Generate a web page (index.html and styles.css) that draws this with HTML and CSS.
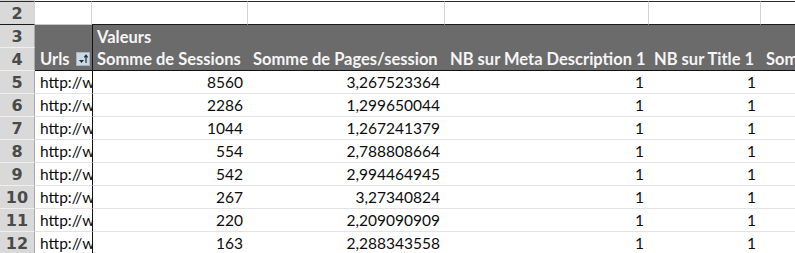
FILE: index.html
```html
<!DOCTYPE html>
<html lang="fr">
<head>
<meta charset="utf-8">
<title>Tableau croisé</title>
<link rel="stylesheet" href="styles.css">
</head>
<body>
<div class="sheet">
  <div class="strip rh"></div><div class="strip wide"></div>

  <div class="rh r2">2</div>
  <div class="c r2 ca"></div>
  <div class="c r2 cb"></div>
  <div class="c r2"></div>
  <div class="c r2"></div>
  <div class="c r2"></div>
  <div class="c r2 last"></div>

  <div class="rh">3</div>
  <div class="c hd ca"></div>
  <div class="c hd cb"><span class="ht">Valeurs</span></div>
  <div class="c hd"></div>
  <div class="c hd"></div>
  <div class="c hd"></div>
  <div class="c hd last"></div>

  <div class="rh">4</div>
  <div class="c hd h4 ca"><span class="ht">Urls</span><span class="filter"><svg width="12" height="12" viewBox="0 0 12 12"><path d="M2 7h5l-2.5 3z" fill="#1e2a38"/><path d="M9 10V2.6M7.3 4.4L9 2.3l1.7 2.1" stroke="#1e2a38" stroke-width="1.2" fill="none"/></svg></span></div>
  <div class="c hd h4 cb"><span class="ht">Somme de Sessions</span></div>
  <div class="c hd h4"><span class="ht">Somme de Pages/session</span></div>
  <div class="c hd h4"><span class="ht">NB sur Meta Description 1</span></div>
  <div class="c hd h4"><span class="ht">NB sur Title 1</span></div>
  <div class="c hd h4 last"><span class="ht">Somme de Titles</span></div>
</div>
<div class="sheet body-rows" id="rows"></div>
<script src="app.js"></script>
</body>
</html>
```
FILE: app.js
```js
const data = [
  [5, 8560, "3,267523364"],
  [6, 2286, "1,299650044"],
  [7, 1044, "1,267241379"],
  [8, 554, "2,788808664"],
  [9, 542, "2,994464945"],
  [10, 267, "3,27340824"],
  [11, 220, "2,209090909"],
  [12, 163, "2,288343558"]
];
const rows = document.getElementById("rows");
let html = "";
for (const [n, s, p] of data) {
  html += `<div class="rh">${n}</div>` +
    `<div class="c d ca"><span class="url">http://www.exemple.fr/</span></div>` +
    `<div class="c d cb num">${s}</div>` +
    `<div class="c d num">${p}</div>` +
    `<div class="c d num">1</div>` +
    `<div class="c d num">1</div>` +
    `<div class="c d last"></div>`;
}
rows.innerHTML = html;
```
FILE: styles.css
```css
* { box-sizing: border-box; }
html, body { margin: 0; padding: 0; background: #fff; overflow: hidden; }
body { width: 795px; height: 253px; }

.sheet {
  display: grid;
  grid-template-columns: 35px 57px 156px 197px 204px 112px 1fr;
  grid-auto-rows: 23px;
  font-family: "Lato", "Liberation Sans", sans-serif;
  font-size: 15.5px;
  color: #0d0d0d;
}

.strip { height: 1px; }
.sheet > .strip { grid-row: 1; }
.strip.rh { background: #d6d6d6; border: 0; }
.strip.wide { grid-column: 2 / -1; background: #fff; }
.sheet:first-child { grid-template-rows: 1px 24px 23px 23px; }

.rh {
  background: #d9d9d9;
  border-right: 1px solid #a9a9a9;
  border-bottom: 1px solid #efefef;
  color: #4a4a4a;
  font-family: "DejaVu Sans", sans-serif;
  font-weight: bold;
  font-size: 16px;
  display: flex;
  align-items: center;
  justify-content: center;
  padding-top: 1px;
}

.c {
  overflow: hidden;
  white-space: nowrap;
  display: flex;
  align-items: center;
}

.r2 {
  border-top: 1px solid #2a2a2a;
  border-bottom: 1px solid #1a1a1a;
  border-right: 1px solid #d4d4d4;
}
.r2.ca { border-bottom-color: #c8c8c8; }
.r2.last { border-right: 0; }

.hd {
  background: #6b6b6b;
  color: #f5f5f5;
  font-weight: bold;
  font-size: 16.5px;
  padding-left: 5px;
}
.hd.cb { border-left: 1px solid #111; padding-left: 4px; }
.h4 { border-bottom: 1px solid #111; }

.filter {
  margin-left: auto;
  margin-right: 2px;
  width: 14px;
  height: 14px;
  background: #cbd8e6;
  border: 1px solid #a6b4c2;
  display: flex;
  align-items: center;
  justify-content: center;
}
.filter svg { display: block; }

.d {
  border-bottom: 1px solid #e3e3e3;
  padding: 0 5px;
}
.d.cb { border-left: 1px solid #111; }
.d.ca { padding-left: 5px; }
.num { justify-content: flex-end; }
.url { color: #0d0d0d; }
```
